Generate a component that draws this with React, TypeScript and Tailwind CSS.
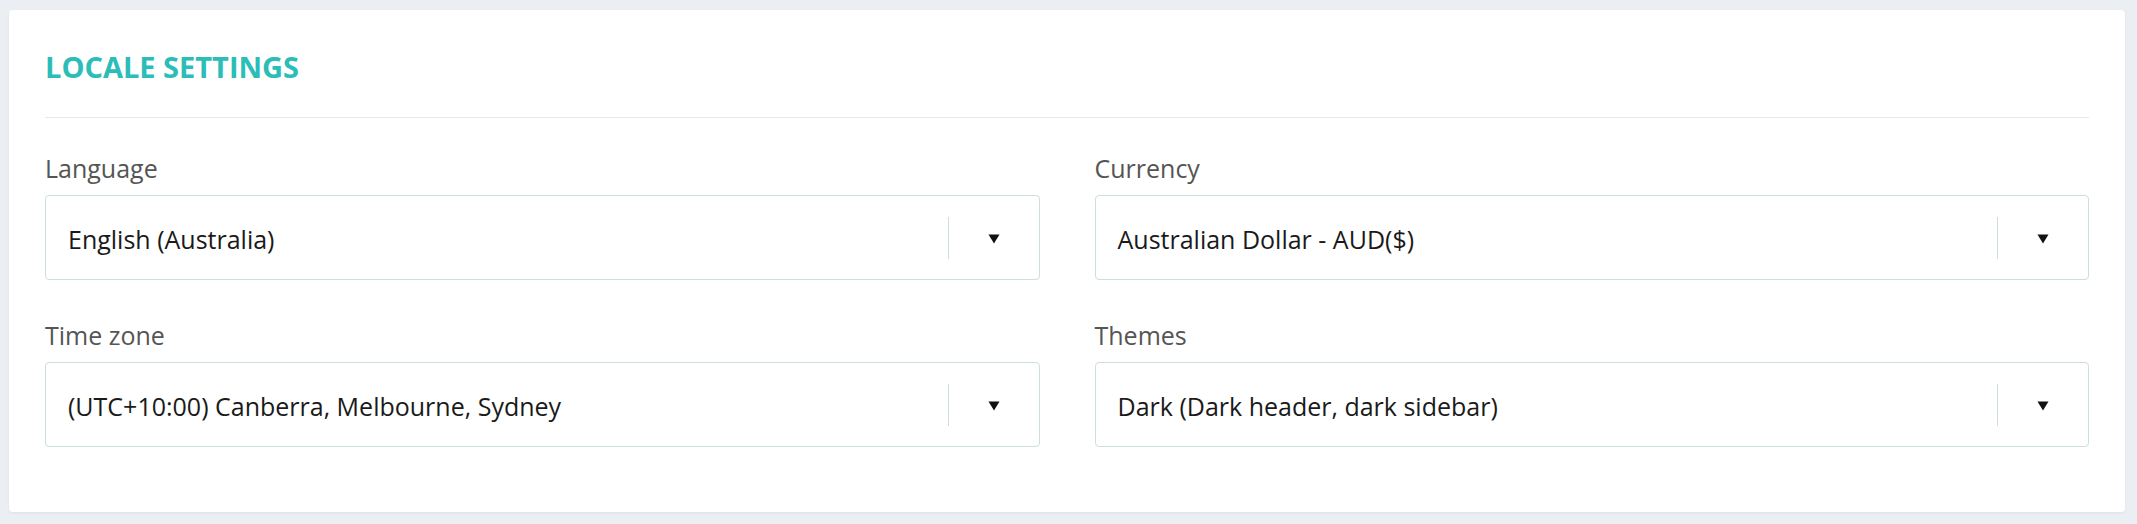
import React from 'react';

interface Field {
  label: string;
  value: string;
}

const fields: Field[] = [
  { label: 'Language', value: 'English (Australia)' },
  { label: 'Currency', value: 'Australian Dollar - AUD($)' },
  { label: 'Time zone', value: '(UTC+10:00) Canberra, Melbourne, Sydney' },
  { label: 'Themes', value: 'Dark (Dark header, dark sidebar)' },
];

const SelectBox: React.FC<Field> = ({ label, value }) => (
  <div className="flex flex-col">
    <label className="text-[25px] leading-[25px] text-[#555555]">{label}</label>
    <div className="mt-[14px] h-[85px] flex items-center border border-[#cddfdd] rounded-[4px] bg-white">
      <span className="flex-1 pl-[22px] pt-[2px] text-[25px] leading-[34px] text-[#1a1a1a] truncate">{value}</span>
      <div className="w-px h-[42px] bg-[#cddfdd]" />
      <div className="w-[90px] pt-[2px] flex items-center justify-center">
        <svg width="12" height="10" viewBox="0 0 12 10">
          <path d="M0.5 0.5 H11.5 L6 9.5 Z" fill="#111111" />
        </svg>
      </div>
    </div>
  </div>
);

export default function App() {
  return (
    <div className="min-h-screen bg-[#ebeef3] pt-[10px] pl-[9px] pr-[12px] pb-[12px]" style={{ fontFamily: '"Open Sans", sans-serif' }}>
      <div className="bg-white rounded-[4px] shadow-[0_1px_3px_rgba(0,0,0,0.06)] h-[502px] pt-[42px] px-[36px]">
        <h2 className="text-[29px] leading-[29px] font-bold text-[#2bbdb7]">LOCALE SETTINGS</h2>
        <div className="mt-[36px] h-px bg-[#e6e8eb]" />
        <div className="mt-[38px] grid grid-cols-2 gap-x-[55px] gap-y-[43px]">
          {fields.map(f => (
            <SelectBox key={f.label} label={f.label} value={f.value} />
          ))}
        </div>
      </div>
    </div>
  );
}
